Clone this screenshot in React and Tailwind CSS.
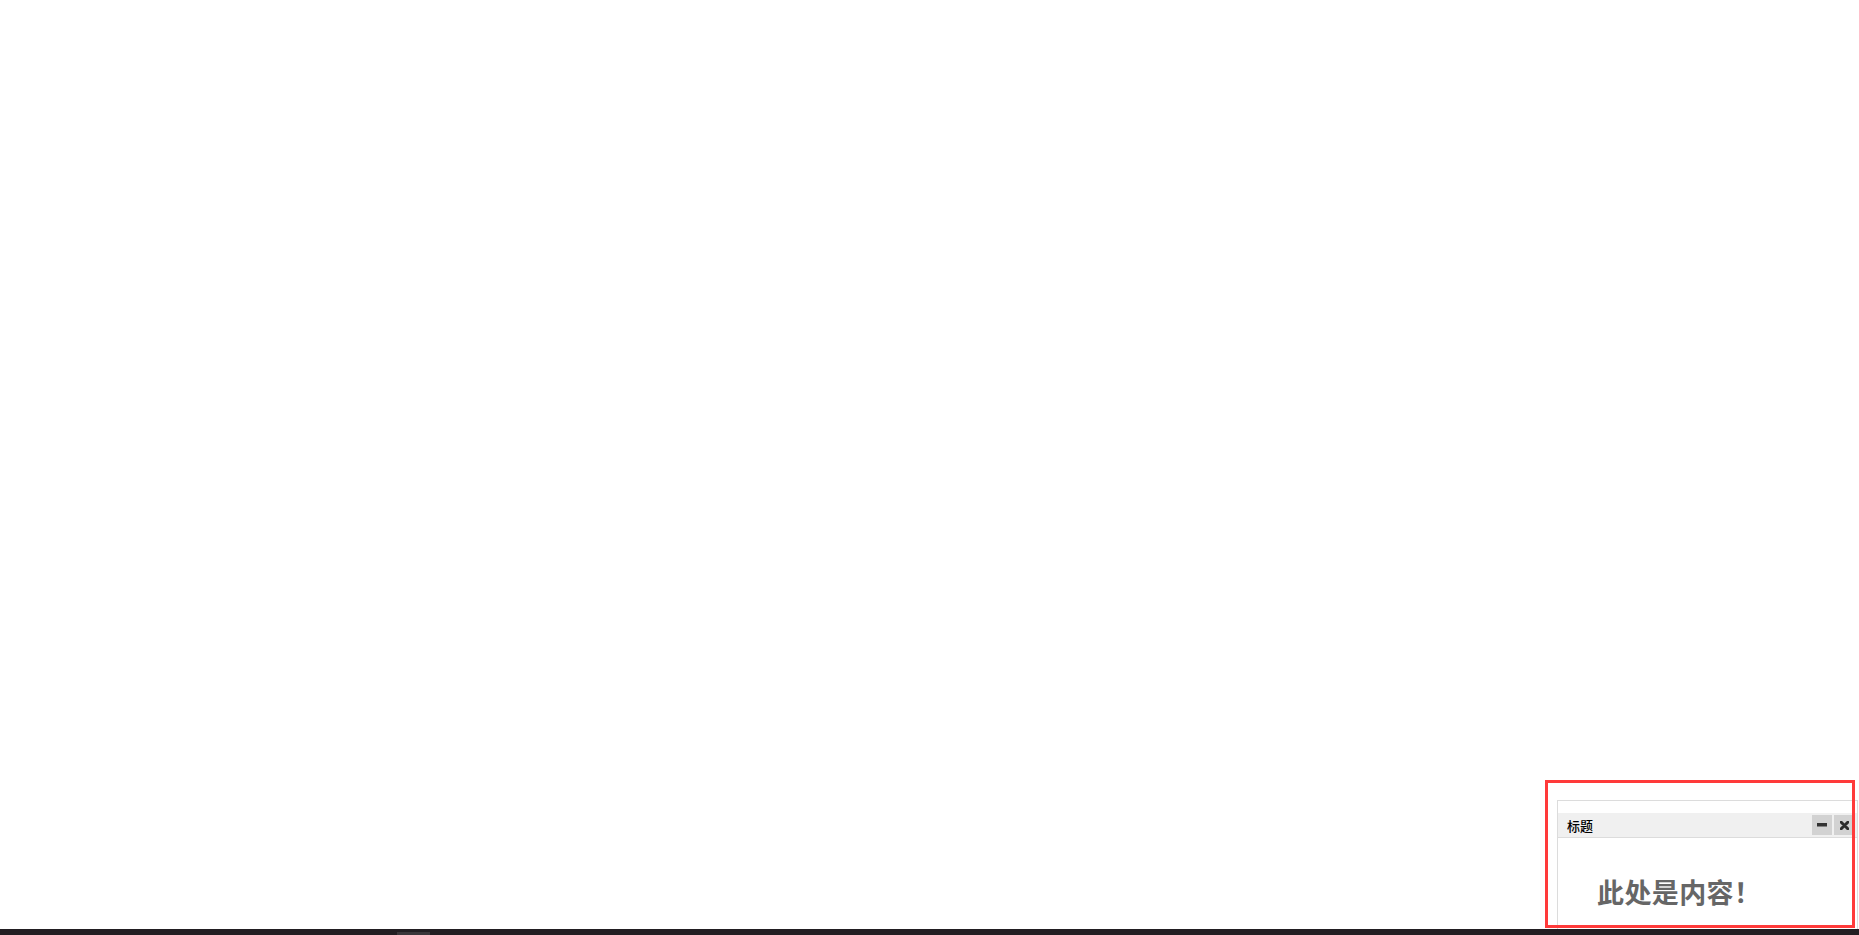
import React from "react";

const CJK = { fontFamily: '"Noto Sans CJK SC", "Noto Sans", sans-serif' };

function MinusIcon() {
  return (
    <svg width="10" height="4" viewBox="0 0 10 4">
      <rect x="0" y="0" width="10" height="3.5" fill="#333" />
    </svg>
  );
}

function CloseIcon() {
  return (
    <svg width="9" height="9" viewBox="0 0 9 9">
      <path d="M1.2 1.2 L7.8 7.8 M7.8 1.2 L1.2 7.8" stroke="#2e2e2e" strokeWidth="3" strokeLinecap="round" />
    </svg>
  );
}

function PopWindow() {
  return (
    <div className="absolute left-[1557px] top-[800px] w-[301px] h-[129px] border border-b-0 border-[#dcdcdc] bg-white" style={CJK}>
      <div className="h-[12px]" />
      <div className="flex h-[25px] items-center justify-between border-b border-[#dcdcdc] bg-[#f0f0f0] pl-[9px] pr-[3px]">
        <span className="text-[13px] font-medium leading-none text-black">标题</span>
        <div className="flex gap-[2px]">
          <button className="flex h-[20px] w-[20px] items-center justify-center bg-[#d2d2d2]">
            <MinusIcon />
          </button>
          <button className="flex h-[20px] w-[20px] items-center justify-center bg-[#d2d2d2]">
            <CloseIcon />
          </button>
        </div>
      </div>
      <div className="pl-[39px] pt-[40px]">
        <h1 className="text-[27px] font-bold leading-[27px] tracking-[0.4px] text-[#666]">此处是内容！</h1>
      </div>
    </div>
  );
}

export default function App() {
  return (
    <div className="relative flex h-[935px] w-full flex-col overflow-hidden bg-white">
      <div className="flex-1" />
      <PopWindow />
      <div className="pointer-events-none absolute left-[1545px] top-[780px] h-[148px] w-[310px] border-[3px] border-[#ff3a3a]" />
      <div className="relative z-10 flex h-[6px] items-end bg-[#221e22] pl-[397px]">
        <div className="h-[3px] w-[33px] bg-[#3a363a]" />
      </div>
    </div>
  );
}
